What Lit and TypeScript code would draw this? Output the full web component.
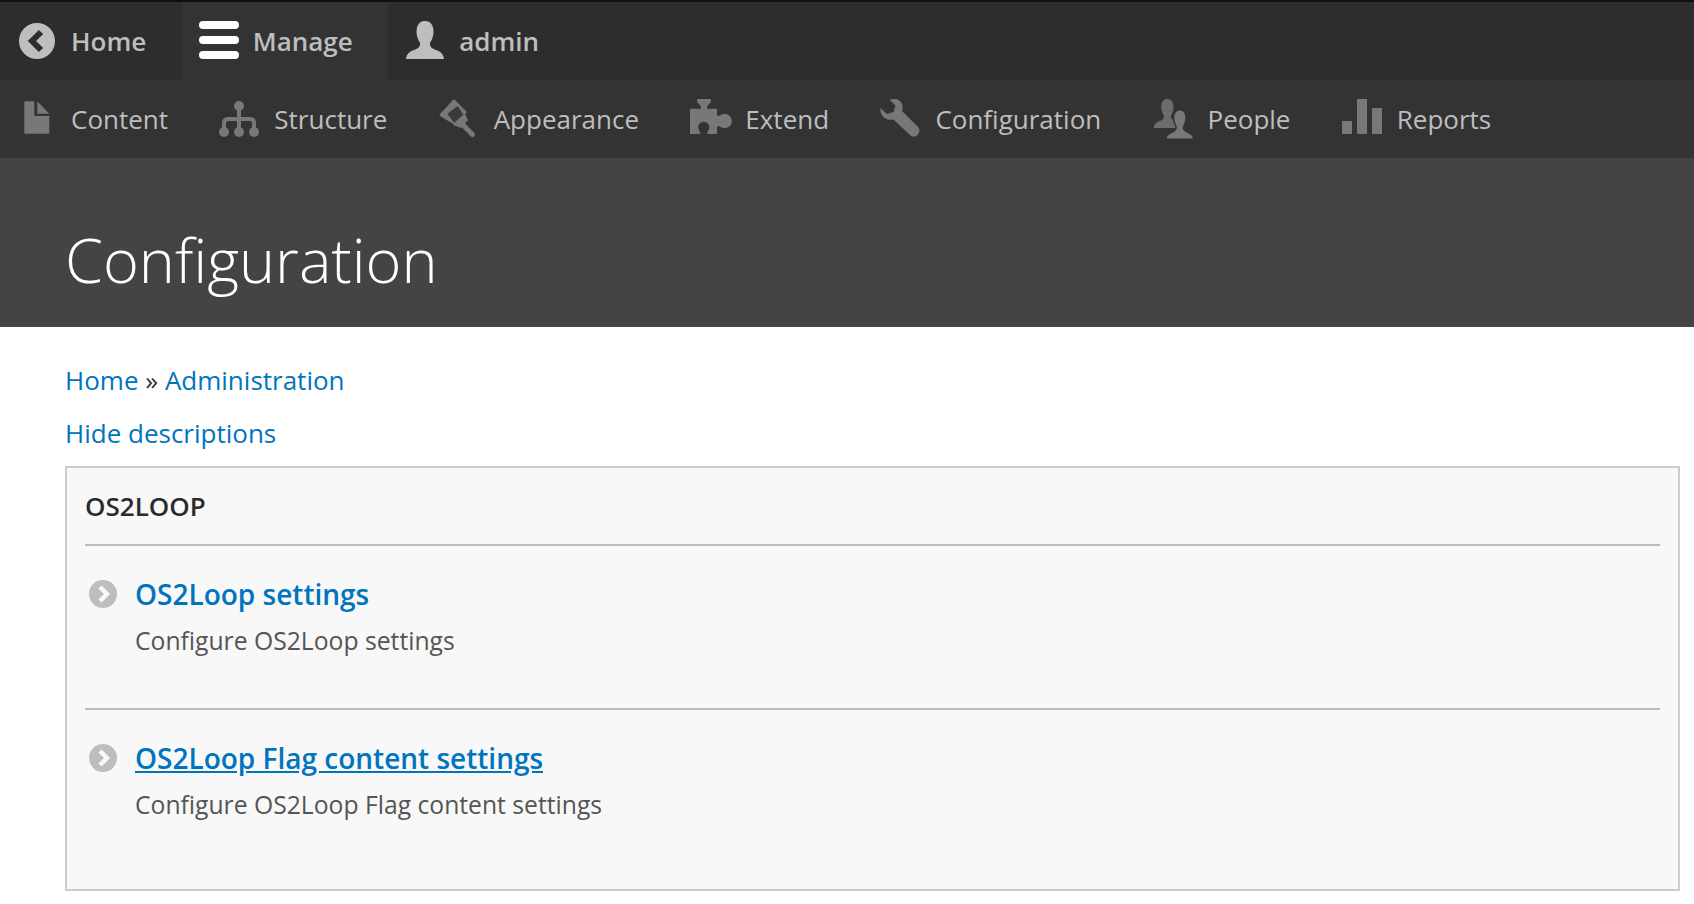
import { LitElement, html, css, svg } from 'lit';
import { customElement } from 'lit/decorators.js';

const person = 'M20 0C27 0 28.5 6 28.5 11C28.5 16 26 20 25 22C24.5 26 27 27.5 31 29C35 30.5 38.5 32.5 39 38L1 38C1.5 32.5 5 30.5 9 29C13 27.5 15.5 26 15 22C14 20 11.5 16 11.5 11C11.5 6 13 0 20 0Z';

const icons: Record<string, unknown> = {
  home: svg`<circle cx="20" cy="20" r="18" fill="#bebebe"/><polyline points="24,11 15,20 24,29" fill="none" stroke="#2d2d2d" stroke-width="6"/>`,
  manage: svg`<rect x="0" y="0" width="40" height="8" rx="4" fill="#fff"/><rect x="0" y="15" width="40" height="8" rx="4" fill="#fff"/><rect x="0" y="30" width="40" height="8" rx="4" fill="#fff"/>`,
  admin: svg`<path d="${person}" fill="#bebebe"/>`,
  // slot starts one px left of the others here, so this one is nudged right
  content: svg`<path d="M8.3 3.3Q8.3 2.3 9.3 2.3H18.3V17H33.3V33.7Q33.3 34.7 32.3 34.7H9.3Q8.3 34.7 8.3 33.7Z"/><path d="M21.3 2.3L33.3 14.7H21.3Z"/>`,
  structure: svg`<circle cx="20" cy="7" r="5"/><circle cx="5" cy="33" r="5"/><circle cx="20" cy="33" r="5"/><circle cx="35" cy="33" r="5"/><path d="M20 8V33M5 33V24Q5 20 9 20H31Q35 20 35 24V33" fill="none" stroke="#787878" stroke-width="4"/>`,
  appearance: svg`<path d="M1 15L14 1Q15 0 16 1L27 12Q28 13 27 14L18 26Q17 27 16 26L1 17Q0 16 1 15Z"/><path d="M8.3 14.7L18.7 7L24.3 15.7L15 23.7Z" fill="#3a3a3a"/><path d="M14 26L26 15L29 21L22 29Z"/><path d="M22 24L33.5 35.5" fill="none" stroke="#787878" stroke-width="5" stroke-linecap="round"/>`,
  extend: svg`<path d="M7 1Q7 0 8 0H20Q21 0 21 1V2Q21 4 18.5 5.5Q17 6.5 17 9.7H27V16.5Q29 17 30 16.5A7.2 7.2 0 1 1 30 27.5Q29 27 27 27.5V35H17.5Q16.5 34 18 32A5.6 5.6 0 1 0 9.5 32Q11 34 10 35H0V9.7H11Q11 6.5 9.5 5.5Q7 4 7 2Z"/>`,
  configuration: svg`<path d="M16 0C19 .6 22 3 22.5 7C22.8 9 22.5 10.5 22 12L38 28C40 30 40 33 38 35.5C36 38 32.5 38.5 30 36L13.5 20.5C11.5 21 9 21 6.5 20C2.5 18 0 14 .3 9L7 15L13.5 13L15.5 6.5L9.5 .8C11.5 0 14 -.3 16 0Z"/>`,
  people: svg`<path d="${person}" transform="scale(.72 .76)" fill="#6c6c6c"/><path d="${person}" transform="translate(12 10.7) scale(.74 .78)" stroke="#333" stroke-width="2"/>`,
  reports: svg`<rect x="0" y="22" width="10" height="13"/><rect x="15" y="0" width="10" height="35"/><rect x="30" y="9" width="10" height="26"/>`,
};

const tabs = [
  { id: 'home', label: 'Home' },
  { id: 'manage', label: 'Manage', active: true },
  { id: 'admin', label: 'admin' },
];
const menu = ['Content', 'Structure', 'Appearance', 'Extend', 'Configuration', 'People', 'Reports'];
const entries = [
  { title: 'OS2Loop settings', desc: 'Configure OS2Loop settings' },
  { title: 'OS2Loop Flag content settings', desc: 'Configure OS2Loop Flag content settings', hover: true },
];

@customElement('app-root')
export class AppRoot extends LitElement {
  static styles = css`
    :host {
      display: block;
      height: 904px;
      overflow: hidden;
      background: #fff;
      font-family: 'Open Sans', sans-serif;
    }
    a {
      color: #0074bd;
      text-decoration: none;
    }
    svg {
      display: block;
      width: 40px;
      height: 40px;
      flex: none;
      overflow: visible;
    }
    .tabs {
      display: flex;
      height: 78px;
      background: #2d2d2d;
      border-top: 2px solid #0f0f0f;
    }
    .tab {
      display: flex;
      align-items: center;
      gap: 14px;
      padding: 0 35.5px 0 17px;
      font-size: 26px;
      font-weight: 600;
      color: #bebebe;
    }
    .tab.active {
      background: #333;
    }
    .menu {
      display: flex;
      align-items: center;
      gap: 51.3px;
      height: 78px;
      padding-left: 16px;
      background: #333;
      color: #bebebe;
      font-size: 26px;
    }
    .menu-item {
      display: flex;
      align-items: center;
      gap: 15px;
    }
    .menu-item svg {
      fill: #787878;
    }
    .head {
      height: 169px;
      padding-left: 65px;
      background: #444;
      color: #fff;
    }
    h1 {
      margin: 0;
      padding-top: 62px;
      font-size: 61.2px;
      line-height: 80px;
      font-weight: 300;
    }
    .page {
      padding: 35px 14px 0 65px;
      font-size: 26px;
      line-height: 36px;
      color: #333;
    }
    .crumbs {
      margin-bottom: 17px;
    }
    .hide {
      display: block;
      margin-bottom: 15px;
    }
    .panel {
      height: 425px;
      box-sizing: border-box;
      padding: 0 18px;
      background: #f8f8f8;
      border: 2px solid #ccc;
    }
    h2 {
      margin: 0;
      height: 76px;
      line-height: 76px;
      font-size: 26px;
      font-weight: 600;
      color: #2b2b2b;
      border-bottom: 2px solid #bbb;
    }
    .entry {
      height: 162px;
      box-sizing: border-box;
      padding: 27.5px 0 0 50px;
      position: relative;
    }
    .entry + .entry {
      border-top: 2px solid #bbb;
    }
    .bullet {
      position: absolute;
      left: 4px;
      top: 34px;
      width: 28px;
      height: 28px;
    }
    .title {
      display: block;
      font-size: 28px;
      line-height: 40px;
      font-weight: 600;
    }
    .title.hover {
      text-decoration: underline;
    }
    .desc {
      margin-top: 9.5px;
      font-size: 24.7px;
      line-height: 36px;
      color: #555;
    }
  `;

  render() {
    return html`
      <div class="tabs">
        ${tabs.map(t => html`<div class="tab ${t.active ? 'active' : ''}">
          <svg viewBox="0 0 40 40">${icons[t.id]}</svg><span>${t.label}</span>
        </div>`)}
      </div>
      <div class="menu">
        ${menu.map(m => html`<div class="menu-item">
          <svg viewBox="0 0 40 40">${icons[m.toLowerCase()]}</svg><span>${m}</span>
        </div>`)}
      </div>
      <div class="head"><h1>Configuration</h1></div>
      <div class="page">
        <div class="crumbs"><a href="#">Home</a> » <a href="#">Administration</a></div>
        <a class="hide" href="#">Hide descriptions</a>
        <div class="panel">
          <h2>OS2LOOP</h2>
          ${entries.map(e => html`<div class="entry">
            <svg class="bullet" viewBox="0 0 28 28">
              <circle cx="14" cy="14" r="14" fill="#bdbdbd"/>
              <polyline points="11,7 18,14 11,21" fill="none" stroke="#f8f8f8" stroke-width="4.5"/>
            </svg>
            <a class="title ${e.hover ? 'hover' : ''}" href="#">${e.title}</a>
            <div class="desc">${e.desc}</div>
          </div>`)}
        </div>
      </div>
    `;
  }
}
